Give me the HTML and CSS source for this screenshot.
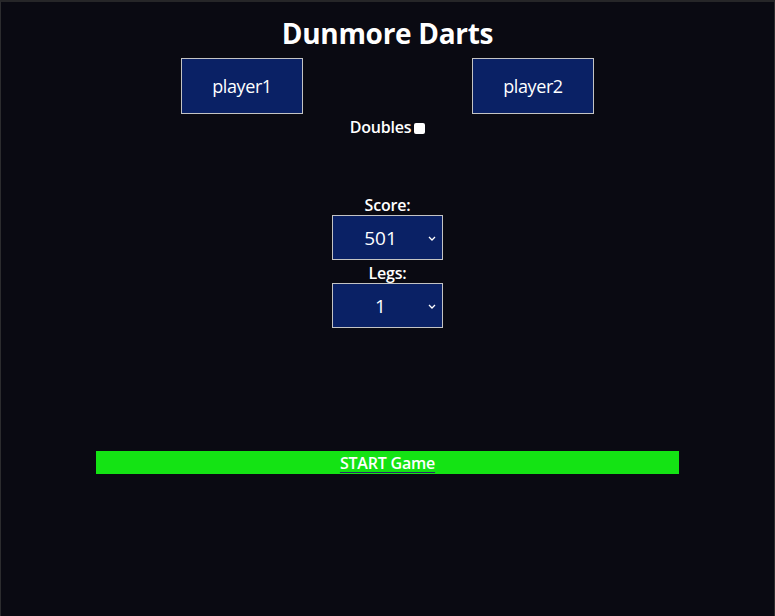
FILE: index.html
```html
<!DOCTYPE html>
<html>
<head>
<meta charset="utf-8">
<title>Dunmore Darts</title>
<link rel="stylesheet" href="styles.css">
</head>
<body>
<div class="frame">
  <h1 class="title">Dunmore Darts</h1>
  <div class="players">
    <button class="player">player1</button>
    <button class="player">player2</button>
  </div>
  <div class="doubles">
    <label class="label" for="dbl">Doubles</label><span class="check"></span>
  </div>
  <div class="settings">
    <label class="label">Score:</label>
    <div class="select"><span>501</span><svg class="chev" width="8" height="5" viewBox="0 0 8 5"><path d="M1 1 L4 4 L7 1" fill="none" stroke="#fff" stroke-width="1.3"/></svg></div>
    <label class="label">Legs:</label>
    <div class="select"><span>1</span><svg class="chev" width="8" height="5" viewBox="0 0 8 5"><path d="M1 1 L4 4 L7 1" fill="none" stroke="#fff" stroke-width="1.3"/></svg></div>
  </div>
  <div class="start"><a class="start-link" href="#">START Game</a></div>
</div>
</body>
</html>
```
FILE: styles.css
```css
html, body {
  margin: 0;
  padding: 0;
  height: 100%;
  background: #0a0a12;
}
body {
  font-family: "Open Sans", "Noto Sans", sans-serif;
  color: #fff;
}
.frame {
  box-sizing: border-box;
  height: 616px;
  border-top: 2px solid #262628;
  border-left: 1px solid #2c2c2e;
  border-right: 1px solid #2c2c2e;
  display: flex;
  flex-direction: column;
  align-items: center;
}
.title {
  margin: 12px 0 0;
  font-size: 28px;
  line-height: 38px;
  font-weight: 700;
  letter-spacing: -0.3px;
}
.players {
  margin-top: 6px;
  display: flex;
  gap: 169px;
}
.player {
  width: 122px;
  height: 56px;
  background: #0a2165;
  border: 1px solid #c4c4c4;
  color: #fff;
  font-family: inherit;
  font-size: 18px;
  letter-spacing: -0.4px;
  padding: 0;
}
.doubles {
  margin-top: 2px;
  display: flex;
  align-items: center;
  height: 22px;
}
.label {
  font-size: 16px;
  font-weight: 600;
  letter-spacing: -0.2px;
  line-height: 20px;
}
.check {
  width: 11px;
  height: 11px;
  background: #fff;
  border-radius: 2px;
  margin-left: 3px;
  margin-top: 3px;
}
.settings {
  margin-top: 57px;
  display: flex;
  flex-direction: column;
  align-items: center;
}
.select {
  box-sizing: border-box;
  width: 111px;
  height: 45px;
  background: #0a2165;
  border: 1px solid #c4c4c4;
  display: flex;
  align-items: center;
  justify-content: center;
  padding-right: 14px;
  position: relative;
  font-size: 19px;
  margin-bottom: 3px;
}
.chev {
  position: absolute;
  right: 6px;
  top: 20px;
}
.start {
  margin-top: 120px;
  width: 583px;
  height: 23px;
  background: #14e314;
  display: flex;
  justify-content: center;
  align-items: center;
}
.start-link {
  color: #fff;
  font-size: 16px;
  font-weight: 600;
  letter-spacing: -0.2px;
  text-decoration-line: underline;
  text-decoration-color: #2a2a6a;
  text-decoration-thickness: 1px;
  text-underline-offset: 3px;
}
```
